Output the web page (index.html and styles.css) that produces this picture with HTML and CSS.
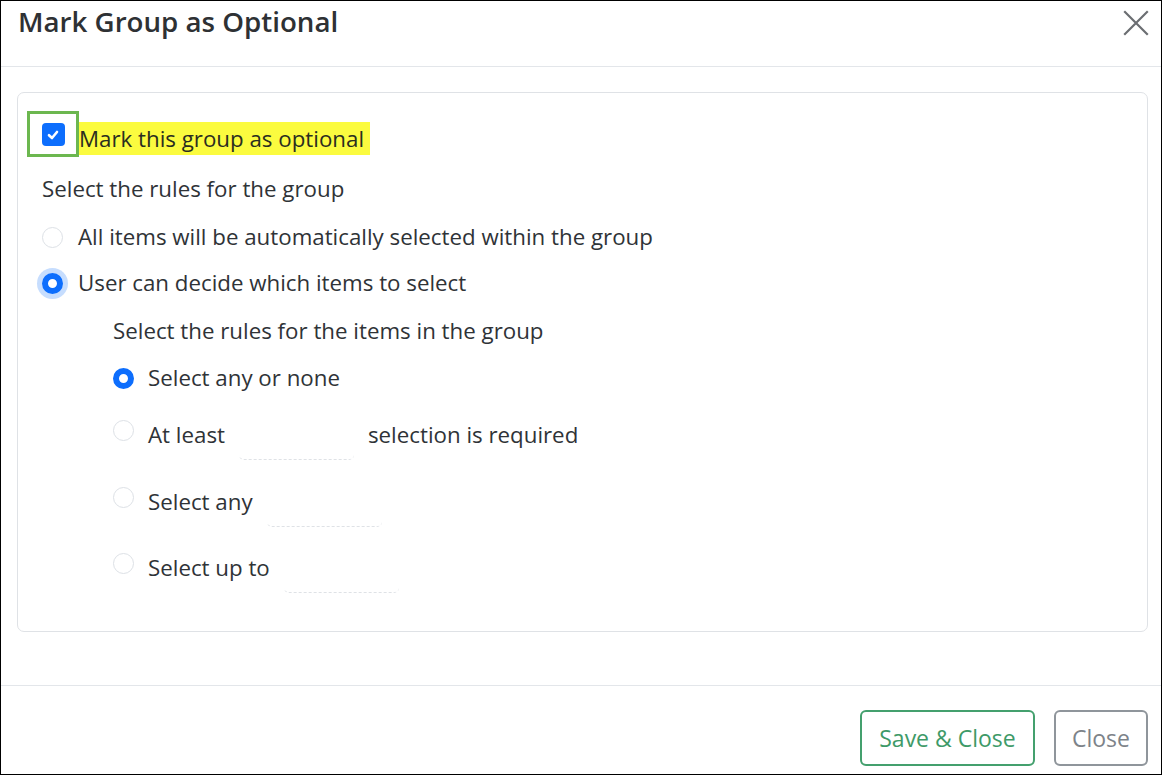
FILE: index.html
```html
<!DOCTYPE html>
<html lang="en">
<head>
<meta charset="utf-8">
<title>Mark Group as Optional</title>
<link rel="stylesheet" href="styles.css">
</head>
<body>
<div class="frame">
  <div class="header">
    <h1 class="title">Mark Group as Optional</h1>
    <button class="close-x" aria-label="Close">
      <svg width="26" height="26" viewBox="0 0 26 26"><path d="M2 2 L24 24 M24 2 L2 24" stroke="#6b6e72" stroke-width="2.2" fill="none" stroke-linecap="square"/></svg>
    </button>
  </div>
  <div class="body">
    <div class="card">
      <div class="check-row">
        <span class="outline"><span class="checkbox"><svg width="14" height="14" viewBox="0 0 14 14"><path d="M3 7.2 L6 10 L11 4" stroke="#fff" stroke-width="2.6" fill="none" stroke-linecap="round" stroke-linejoin="round"/></svg></span></span>
        <span class="highlight">Mark this group as optional</span>
      </div>
      <div class="line heading">Select the rules for the group</div>
      <div class="line opt opt1"><span class="radio"></span><span>All items will be automatically selected within the group</span></div>
      <div class="line opt opt2"><span class="radio checked focus"></span><span>User can decide which items to select</span></div>
      <div class="sub">
        <div class="line sub-heading">Select the rules for the items in the group</div>
        <div class="line opt sopt1"><span class="radio small checked"></span><span>Select any or none</span></div>
        <div class="irow irow1"><span class="radio small"></span><span class="ilabel">At least</span><span class="num"></span><span class="ilabel">selection is required</span></div>
        <div class="irow irow2"><span class="radio small"></span><span class="ilabel">Select any</span><span class="num"></span></div>
        <div class="irow irow3"><span class="radio small"></span><span class="ilabel">Select up to</span><span class="num"></span></div>
      </div>
    </div>
  </div>
  <div class="footer">
    <button class="btn btn-save">Save &amp; Close</button>
    <button class="btn btn-close">Close</button>
  </div>
</div>
</body>
</html>
```
FILE: styles.css
```css
* { box-sizing: border-box; }
html, body { margin: 0; padding: 0; background: #fff; }
body {
  font-family: "Open Sans", "Noto Sans", sans-serif;
  color: #2f3337;
}
.frame {
  width: 1162px;
  height: 775px;
  border: 1.5px solid #000;
  border-top-width: 1px;
  display: flex;
  flex-direction: column;
  overflow: hidden;
}
.header {
  height: 66px;
  flex: none;
  border-bottom: 1px solid #e3e6ea;
  display: flex;
  align-items: flex-start;
  justify-content: space-between;
  padding: 3px 12px 0 17px;
}
.title {
  margin: 0;
  font-size: 27.7px;
  line-height: 34px;
  font-weight: 600;
  color: #2e3134;
}
.close-x {
  border: 0;
  background: none;
  padding: 0;
  margin-top: 6px;
  width: 26px;
  height: 26px;
  display: flex;
}
.body {
  flex: none;
  padding: 25px 13px 0 16px;
}
.card {
  border: 1px solid #dfe2e6;
  border-radius: 7px;
  height: 540px;
  padding: 18px 0 0 0;
}
.check-row {
  display: flex;
  align-items: flex-start;
  height: 46px;
  padding-left: 9px;
}
.outline {
  width: 52px;
  height: 46px;
  border: 3px solid #6cb74f;
  display: flex;
  align-items: center;
  justify-content: center;
}
.checkbox {
  width: 23px;
  height: 23px;
  margin-top: 1px;
  border-radius: 4px;
  background: #0d6efd;
  display: flex;
  align-items: center;
  justify-content: center;
}
.highlight {
  margin-top: 11px;
  background: #fbfb3f;
  font-size: 22.3px;
  line-height: 33px;
  height: 33px;
  padding: 0 6px 0 0;
  color: #2a2d20;
}
.line {
  font-size: 22.3px;
  line-height: 30px;
  height: 30px;
}
.heading { margin: 17px 0 0 24px; }
.opt {
  display: flex;
  align-items: center;
  gap: 15px;
}
.opt1 { margin: 18px 0 0 24px; }
.opt2 { margin: 16px 0 0 24px; }
.radio {
  flex: none;
  width: 21px;
  height: 21px;
  border-radius: 50%;
  border: 1px solid #dde1e6;
  background: #fff;
}
.radio.checked {
  border: 6px solid #0d6efd;
  background: #fff;
}
.radio.focus {
  box-shadow: 0 0 0 5px #c6ddfe;
}
.sub { padding-left: 95px; }
.sub-heading { margin-top: 18px; }
.sopt1 { margin-top: 17px; gap: 14px; }
.irow {
  display: flex;
  align-items: flex-start;
  height: 40px;
  font-size: 22.3px;
}
.irow .radio { margin-right: 14px; }
.ilabel { line-height: 30px; }
.num {
  width: 115px;
  height: 40px;
  margin: 0 14px;
  border-bottom: 1px dashed #dfe2e6;
  border-radius: 0 0 5px 5px;
}
.irow1 { margin-top: 27px; }
.irow2 { margin-top: 27px; }
.irow3 { margin-top: 26px; }
.footer {
  margin-top: 53px;
  border-top: 1px solid #e3e6ea;
  flex: 1;
  display: flex;
  justify-content: flex-end;
  align-items: flex-start;
  gap: 19px;
  padding: 24px 13px 0 0;
}
.btn {
  font-family: "Open Sans", "Noto Sans", sans-serif;
  font-size: 23px;
  height: 56px;
  border-radius: 6px;
  background: #fff;
  padding: 0 10px;
}
.btn-save {
  width: 175px;
  border: 2px solid #44a06e;
  color: #3e9a68;
}
.btn-close {
  width: 94px;
  border: 2px solid #8f959b;
  color: #7d8389;
}
```
